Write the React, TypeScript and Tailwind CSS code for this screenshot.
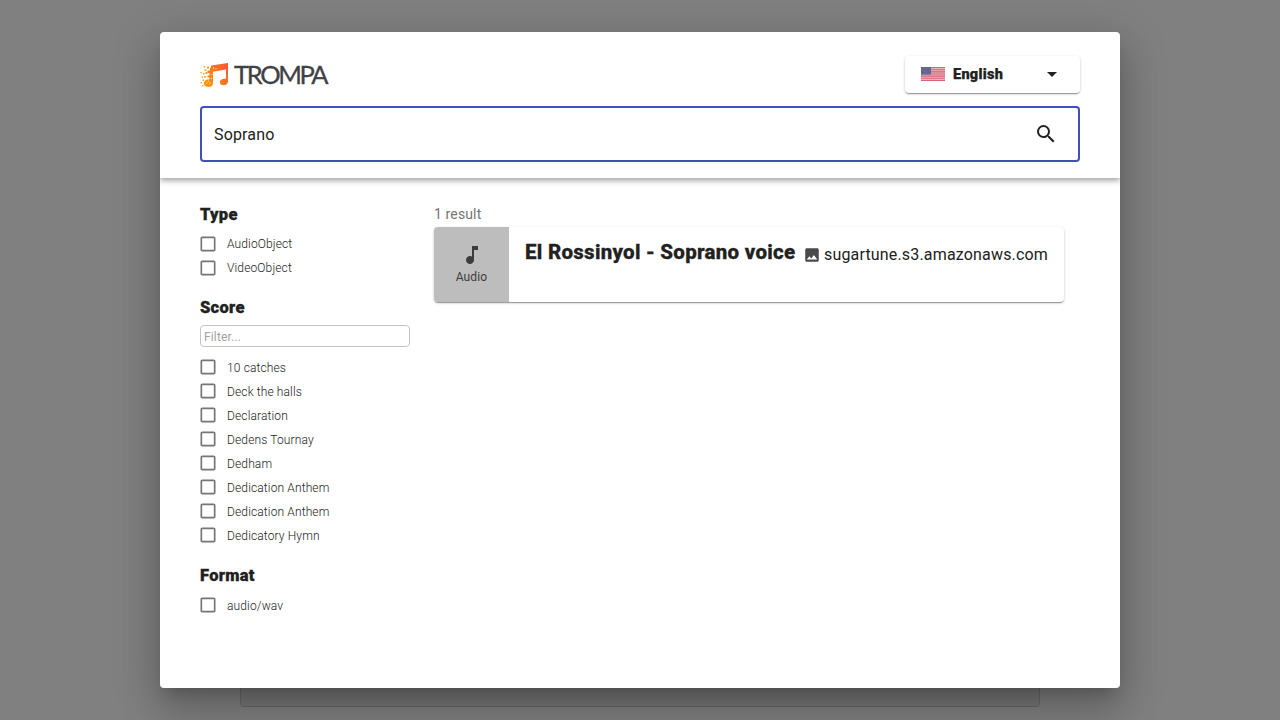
import React from 'react';
import { MdArrowDropDown, MdCheckBoxOutlineBlank, MdImage, MdMusicNote, MdSearch } from 'react-icons/md';

const scores = [
  '10 catches',
  'Deck the halls',
  'Declaration',
  'Dedens Tournay',
  'Dedham',
  'Dedication Anthem',
  'Dedication Anthem',
  'Dedicatory Hymn',
];

function Logo() {
  return (
    <div className="flex h-[30px] items-center">
      <svg className="block h-[30px] w-[30px]" viewBox="0 0 30 30">
        <defs>
          <linearGradient id="note" gradientUnits="userSpaceOnUse" x1="5" y1="24" x2="28" y2="8">
            <stop offset="0" stopColor="#ff9800" />
            <stop offset="0.5" stopColor="#fd7a1c" />
            <stop offset="1" stopColor="#f7593c" />
          </linearGradient>
        </defs>
        <path
          fill="url(#note)"
          d="M11 5.500 28 3v18.400c0 2.400-1.900 3.800-4.300 3.800-2.300 0-3.900-1.100-3.900-2.900 0-2.200 2-3.500 4.400-3.500h1.800V9.600L13 11.800v10.700c0 3-1.500 4.500-4.500 4.500-2.800 0-4.600-1-4.600-3.400 0-2.200 1.300-3.600 3.300-4.200H9.500v-2h-2v-2h2v-2.500h-2v-2.500H10V8h1z"
        />
        <path
          fill="#ffa020"
          d="M7 6.500h2v2H7zM4.500 9.500h2v1.500h-2zM3.500 6H5v1.300H3.500zM5.500 12h2v2h-2zM3 13h1.500v1.500H3zM.5 12H2v1.300H.5zM4 16h2v1.500H4zM1.500 16.500H3v1.300H1.500zM2.500 19.500h1.500v1.500H2.500zM.5 22H2v1.300H.5zM2 25h1.500v1.300H2z"
        />
        <path fill="#fff0d0" d="M8 20.500h1v1H8zM9.500 22.500h1v1.200h-1zM6.500 22.500h1v1h-1zM11 18h1v1h-1zM11.500 14h1v1h-1zM13 7.500h1v1.200h-1zM15.500 8.500h1v1h-1z" />
      </svg>
      <span className="-mt-[2px] ml-1 font-[Lato,sans-serif] text-[25.5px] leading-[30px] tracking-[-2.35px] text-[#3f4145] [-webkit-text-stroke:0.3px_#3f4145]">
        TROMPA
      </span>
    </div>
  );
}

function Flag() {
  return (
    <svg className="-mt-px block h-[14px] w-6" viewBox="0 0 24 14" opacity="0.78">
      <path fill="#e3a5ae" d="M0 0h24v14H0z" />
      <path stroke="#c93a50" strokeWidth="1.077" d="M0 .54h24M0 2.690h24M0 4.850h24M0 7h24M0 9.150h24M0 11.310h24M0 13.460h24" />
      <path fill="#34346e" d="M0 0h10v7.540H0z" />
      <path stroke="#6c6c9c" strokeWidth=".6" strokeDasharray=".8 1" d="M.8 1.300h8.800M1.600 3h8M.8 4.700h8.800M1.600 6.300h8" />
    </svg>
  );
}

function Heading({ children }: { children: React.ReactNode }) {
  return (
    <h2 className="h-6 pt-px text-[16.5px] leading-6 font-black tracking-[0.28px] [-webkit-text-stroke:0.3px]">{children}</h2>
  );
}

function Option({ label, low = false }: { label: string; low?: boolean }) {
  return (
    <label className="flex h-6 items-center">
      <MdCheckBoxOutlineBlank className="-ml-[2px] size-5 shrink-0 text-[#757575]" />
      <span className={`ml-[9px] text-[12px] leading-6 font-light tracking-[0.13px] ${low ? 'pt-[2px]' : ''}`}>{label}</span>
    </label>
  );
}

export default function App() {
  return (
    <div className="relative h-[720px] w-full overflow-hidden bg-[#808080] font-[Roboto,sans-serif] text-[#212121]">
      <div className="absolute top-[600px] left-[240px] h-[107px] w-[800px] rounded-[4px] border border-[#686868] bg-[#777]" />
      <div className="relative mx-auto mt-8 flex h-[656px] w-[960px] flex-col rounded-[4px] bg-white shadow-[0px_11px_15px_-7px_rgba(0,0,0,0.2),0px_24px_38px_3px_rgba(0,0,0,0.14),0px_9px_46px_8px_rgba(0,0,0,0.12)]">
        <header className="h-[146px] rounded-t-[4px] px-10 pt-6 shadow-[0px_2px_4px_-1px_rgba(0,0,0,0.2),0px_4px_5px_0px_rgba(0,0,0,0.14),0px_1px_10px_0px_rgba(0,0,0,0.12)] [clip-path:inset(0_0_-20px_0)]">
          <div className="flex items-start justify-between">
            <div className="pt-1">
              <Logo />
            </div>
            <button className="flex h-[37px] w-[175px] items-center rounded-[4px] px-4 shadow-[0px_2px_1px_-1px_rgba(0,0,0,0.2),0px_1px_1px_0px_rgba(0,0,0,0.14),0px_1px_3px_0px_rgba(0,0,0,0.2)]">
              <Flag />
              <span className="ml-2 text-[14.5px] font-black tracking-[0.27px] [-webkit-text-stroke:0.25px]">English</span>
              <MdArrowDropDown className="-mt-px ml-auto size-6" />
            </button>
          </div>
          <div className="mt-[13px] flex h-14 items-center rounded-[4px] border-2 border-[#3f51b5] pr-5 pl-3">
            <span className="grow pt-[2px] text-[16px] tracking-[0.15px]">Soprano</span>
            <MdSearch className="size-6" />
          </div>
        </header>
        <div className="flex grow px-10 pt-6">
          <aside className="w-[210px]">
            <Heading>Type</Heading>
            <div className="mt-[6px]">
              <Option label="AudioObject" />
              <Option label="VideoObject" />
            </div>
            <div className="mt-[15px]">
              <Heading>Score</Heading>
            </div>
            <input
              aria-label="Filter"
              placeholder="Filter..."
              className="mt-[6px] block h-[22px] w-[210px] rounded-[4px] border border-[#c4c4c4] px-[3px] pt-[2px] text-[12px] tracking-[0.15px] placeholder:text-[#a2a2a2]"
            />
            <div className="mt-2">
              {scores.map((s, i) => (
                <Option key={i} label={s} low />
              ))}
            </div>
            <div className="mt-4">
              <Heading>Format</Heading>
            </div>
            <div className="mt-[6px]">
              <Option label="audio/wav" low />
            </div>
          </aside>
          <main className="ml-6 w-[630px]">
            <p className="h-6 text-[14px] leading-6 tracking-[0.13px] text-[#757575]">1 result</p>
            <article className="mt-px flex h-[75px] rounded-[4px] shadow-[0px_2px_1px_-1px_rgba(0,0,0,0.2),0px_1px_1px_0px_rgba(0,0,0,0.14),0px_1px_3px_0px_rgba(0,0,0,0.2)]">
              <div className="flex w-[75px] flex-col items-center rounded-l-[4px] bg-[#bdbdbd] pt-4 text-[#3c3c3c]">
                <MdMusicNote className="size-6" />
                <span className="text-[12px] leading-5 tracking-[0.15px]">Audio</span>
              </div>
              <div className="flex h-12 items-center pt-[3px] pl-4">
                <h3 className="-mt-[2px] w-[271px] text-[20.5px] leading-8 font-extrabold tracking-[0.27px] whitespace-nowrap [-webkit-text-stroke:0.3px]">
                  El Rossinyol - Soprano voice
                </h3>
                <MdImage className="mt-[5px] ml-[7px] size-[18px] text-[#4a4a4a]" />
                <span className="mt-1 ml-[3px] text-[16px] tracking-[0.17px]">sugartune.s3.amazonaws.com</span>
              </div>
            </article>
          </main>
        </div>
      </div>
    </div>
  );
}
